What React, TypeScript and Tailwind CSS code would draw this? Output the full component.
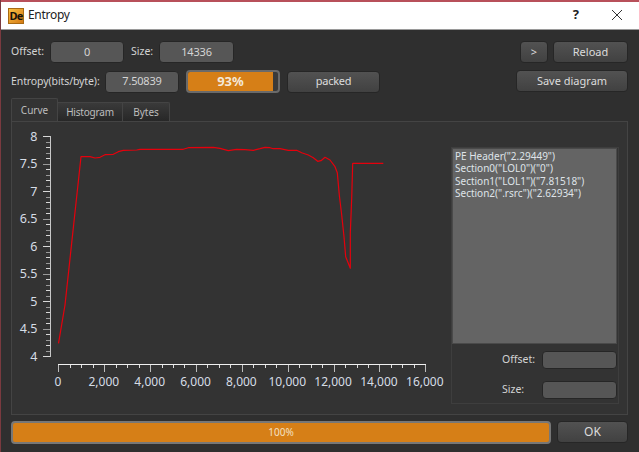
import React from "react";

const topPts: [number, number][] = [[243,110],[270,110],[285,114],[300,112],[315,104],[340,103],[355,95],[370,91],[410,90],[420,88],[550,88],[565,83],[640,82],[660,85]];
const rightPts: [number, number][] = [[25,92],[50,88],[75,89],[100,91],[120,86],[135,82],[150,83],[160,86],[180,86],[205,91],[230,91],[245,98],[265,105],[280,113],[293,124],[303,122],[315,112],[330,120],[345,140],[352,158],[358,225],[365,285],[372,350],[377,410],[391,445],[391,340],[395,235],[398,130],[490,130]];
const curve = [
  "58.5,343.3",
  "65,305",
  ...topPts.map(([x, y]) => `${(x / 3).toFixed(1)},${(120 + y / 3).toFixed(1)}`),
  ...rightPts.map(([x, y]) => `${(220 + x / 3).toFixed(1)},${(120 + y / 3).toFixed(1)}`),
].join(" ");

const yLabels = ["8", "7.5", "7", "6.5", "6", "5.5", "5", "4.5", "4"];
const xLabels = ["0", "2,000", "4,000", "6,000", "8,000", "10,000", "12,000", "14,000", "16,000"];

function Field({ w, h = "h-[22px]", children }: { w: string; h?: string; children?: React.ReactNode }) {
  return <div className={`${w} ${h} flex items-center justify-center rounded-[4px] border border-[#262626] bg-[#565656] text-[#d4d4d4] tracking-[-0.2px]`}>{children}</div>;
}

function Button({ w, children }: { w: string; children: React.ReactNode }) {
  return <div className={`${w} h-[22px] flex items-center justify-center rounded-[4px] border border-[#262626] bg-gradient-to-b from-[#525252] to-[#414141] text-[#dcdcdc]`}>{children}</div>;
}

function Chart() {
  const ticksY = Array.from({ length: 41 }, (_, i) => i);
  const ticksX = Array.from({ length: 33 }, (_, i) => i);
  return (
    <svg width="429" height="292" viewBox="12 122 429 292" className="shrink-0 overflow-visible">
      <g stroke="#c8c8c8" strokeWidth="1" shapeRendering="crispEdges">
        <line x1="50.5" y1="136" x2="50.5" y2="356.5" />
        {ticksY.map((i) => {
          const y = Math.round(136 + i * 5.5) + 0.5;
          return <line key={i} x1={i % 5 === 0 ? 43 : 46} y1={y} x2="50" y2={y} stroke={i % 2 ? "#9a9a9a" : "#d8d8d8"} />;
        })}
      </g>
      <g stroke="#e4e4e4" strokeWidth="1" shapeRendering="crispEdges">
        <line x1="58" y1="364.5" x2="426" y2="364.5" stroke="#f0f0f0" />
        {ticksX.map((i) => {
          const x = Math.round(58.3 + i * 11.47) + 0.5;
          return <line key={i} x1={x} y1="365" x2={x} y2={i % 4 === 0 ? 372 : 368} stroke={i % 4 === 0 ? "#bdbdbd" : "#dcdcdc"} />;
        })}
      </g>
      <polyline points={curve} fill="none" stroke="#e6000c" strokeWidth="1.2" strokeLinejoin="round" />
      <g fill="#d6dde6" fontSize="12.5" textAnchor="end">
        {yLabels.map((t, i) => (
          <text key={t} x="37.5" y={136 + i * 27.5 + 4.5}>{t}</text>
        ))}
      </g>
      <g fill="#d6dde6" fontSize="12" textAnchor="middle">
        {xLabels.map((t, i) => (
          <text key={t} x={58 + i * 45.85} y="386">{t}</text>
        ))}
      </g>
    </svg>
  );
}

export default function App() {
  return (
    <div className="w-[639px] h-[452px] overflow-hidden flex flex-col bg-[#2f2f2f] border-l border-[#7a3a3f] text-[11px] text-[#d4d4d4] font-['Noto_Sans','DejaVu_Sans',sans-serif]">
      <div className="h-[30px] shrink-0 -ml-px bg-white border-t-2 border-t-[#b8505a] border-b border-b-[#9a9a9a] flex items-center text-[#222] text-[12px]">
        <div className="ml-[8px] w-[16px] h-[16px] shrink-0 flex items-center justify-center border border-[#a86a14] bg-gradient-to-br from-[#f8c040] to-[#d47a14] text-[#15120a] text-[11px] leading-none font-bold tracking-[-0.8px]">De</div>
        <span className="ml-[4px] tracking-[-0.3px] -mt-px">Entropy</span>
        <span className="ml-auto mr-[32px] font-bold text-[13px] -mt-[2px]">?</span>
        <svg width="12" height="12" viewBox="0 0 12 12" className="mr-[16px] -mt-[2px]" fill="none" stroke="#333" strokeWidth="1">
          <path d="M1 1l10 10M11 1L1 11" />
        </svg>
      </div>

      <div className="flex-1 min-h-0 flex flex-col pl-[10px] pr-[10px] pt-[11px] mr-px">
        <div className="flex justify-between h-[22px]">
          <div className="flex items-center">
            <span className="w-[39px] text-[10.5px]">Offset:</span>
            <Field w="w-[74px]">0</Field>
            <span className="ml-[7px] w-[28px] text-[10.5px]">Size:</span>
            <Field w="w-[75px]">14336</Field>
          </div>
          <div className="flex gap-[5px]">
            <Button w="w-[28px]">&gt;</Button>
            <Button w="w-[75px]">Reload</Button>
          </div>
        </div>

        <div className="flex justify-between h-[23px] mt-[7px]">
          <div className="flex items-center">
            <span className="w-[94px] text-[10.5px] tracking-[-0.1px]">Entropy(bits/byte):</span>
            <Field w="w-[74px]">7.50839</Field>
            <div className="ml-[7px] w-[94px] h-[23px] flex rounded-[4px] border-2 border-[#6a6a6a] bg-[#3a3a3a] overflow-hidden">
              <div className="w-[85px] bg-[#d67f17] flex items-center justify-center font-bold text-[13px] text-[#f4e8d8]">93%</div>
            </div>
            <div className="ml-[7px]"><Button w="w-[93px]"><span className="tracking-[-0.3px]">packed</span></Button></div>
          </div>
          <Button w="w-[112px]">Save diagram</Button>
        </div>

        <div className="flex h-[22px] mt-[6px] items-end text-[10px]">
          <div className="w-[47px] h-[23px] flex items-center justify-center bg-[#333333] border border-b-0 border-[#444444] rounded-t-[2px] text-[#bdbdbd]">Curve</div>
          <div className="w-[65px] h-[19px] flex items-center justify-center bg-gradient-to-b from-[#3a3a3a] to-[#272727] border border-b-0 border-l-0 border-[#444444] text-[#bdbdbd] tracking-[-0.2px]">Histogram</div>
          <div className="w-[47px] h-[19px] flex items-center justify-center bg-gradient-to-b from-[#3a3a3a] to-[#272727] border border-b-0 border-l-0 border-[#444444] rounded-tr-[2px] text-[#bdbdbd]">Bytes</div>
        </div>

        <div className="h-[294px] flex bg-[#333333] border border-[#444444]">
          <Chart />
          <div className="mt-[25px] ml-[10px] w-[168px] h-[257px] flex flex-col items-end border border-[#3e3e3e] pr-[1px]">
            <div className="w-[165px] h-[196px] bg-[#646464] border border-[#4a4a4a] px-[2px] pt-[1px] leading-[12.3px] text-[10px] text-[#dfe3e8]">
              <div>PE Header("2.29449")</div>
              <div>Section0("LOL0")("0")</div>
              <div>Section1("LOL1")("7.81518")</div>
              <div>Section2(".rsrc")("2.62934")</div>
            </div>
            <div className="flex items-center mt-[7px] text-[10.5px]">
              <span className="w-[40px]">Offset:</span>
              <Field w="w-[75px]" h="h-[18px]" />
            </div>
            <div className="flex items-center mt-[12px] text-[10.5px]">
              <span className="w-[40px]">Size:</span>
              <Field w="w-[75px]" h="h-[18px]" />
            </div>
          </div>
        </div>

        <div className="flex justify-between mt-[6px] h-[23px]">
          <div className="w-[540px] flex items-center justify-center rounded-[4px] border-2 border-[#777777] bg-[#d67f17] text-[10px] text-[#f4e0c4]">100%</div>
          <Button w="w-[71px]"><span className="text-[12px]">OK</span></Button>
        </div>
      </div>
    </div>
  );
}
